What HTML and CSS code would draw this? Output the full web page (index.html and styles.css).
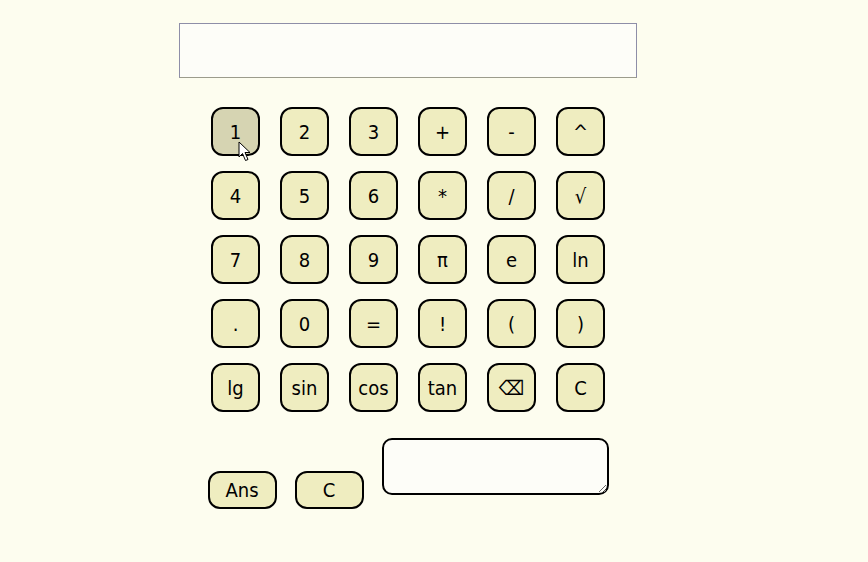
FILE: index.html
```html
<!DOCTYPE html>
<html>
<head>
<meta charset="utf-8">
<link rel="stylesheet" href="styles.css">
</head>
<body>
<div class="calc">
  <input class="display" type="text">
  <div class="keys">
    <button class="key hover">1</button>
    <button class="key">2</button>
    <button class="key">3</button>
    <button class="key">+</button>
    <button class="key">-</button>
    <button class="key">^</button>
    <button class="key">4</button>
    <button class="key">5</button>
    <button class="key">6</button>
    <button class="key">*</button>
    <button class="key">/</button>
    <button class="key">√</button>
    <button class="key">7</button>
    <button class="key">8</button>
    <button class="key">9</button>
    <button class="key">π</button>
    <button class="key">e</button>
    <button class="key">ln</button>
    <button class="key">.</button>
    <button class="key">0</button>
    <button class="key">=</button>
    <button class="key">!</button>
    <button class="key">(</button>
    <button class="key">)</button>
    <button class="key">lg</button>
    <button class="key">sin</button>
    <button class="key">cos</button>
    <button class="key">tan</button>
    <button class="key">⌫</button>
    <button class="key">C</button>
  </div>
  <div class="bottom">
    <button class="wide">Ans</button>
    <button class="wide">C</button>
    <textarea class="memo"></textarea>
  </div>
  <svg class="cursor" width="14" height="22" viewBox="0 0 14 22">
    <path d="M1 1 L1 16 L4.5 12.5 L7.5 19.5 L10 18.5 L7 11.5 L12 11.5 Z" fill="#fff" stroke="#000" stroke-width="1" stroke-linejoin="round"/>
  </svg>
</div>
</body>
</html>
```
FILE: styles.css
```css
html, body {
  margin: 0;
  padding: 0;
  background: #fdfdef;
}
body {
  font-family: "DejaVu Sans Condensed", "DejaVu Sans", sans-serif;
}
.calc {
  position: relative;
  width: 458px;
  margin: 23px 0 0 179px;
  display: flex;
  flex-direction: column;
  align-items: center;
}
.display {
  box-sizing: border-box;
  width: 458px;
  height: 55px;
  margin: 0;
  border: 1px solid #8e8ea8;
  border-bottom-color: #9c9c8c;
  background: #fdfdf8;
  outline: none;
}
.keys {
  margin-top: 29px;
  display: grid;
  grid-template-columns: repeat(6, 49px);
  grid-auto-rows: 49px;
  column-gap: 20px;
  row-gap: 15px;
}
.key, .wide {
  box-sizing: border-box;
  margin: 0;
  padding: 0;
  border: 2px solid #000;
  border-radius: 12px;
  background: #efedc0;
  color: #000;
  font-family: "DejaVu Sans Condensed", "DejaVu Sans", sans-serif;
  font-size: 20px;
  line-height: 1;
}
.key.hover {
  background: #d6d4b2;
}
.bottom {
  margin-top: 26px;
  display: flex;
  align-items: flex-start;
  gap: 18px;
}
.wide {
  width: 69px;
  height: 38px;
  margin-top: 33px;
  border-radius: 12px;
}
.memo {
  box-sizing: border-box;
  width: 227px;
  height: 57px;
  margin: 0;
  border: 2px solid #000;
  border-radius: 10px;
  background: #fdfdf8;
  outline: none;
  resize: both;
}
.cursor {
  position: absolute;
  left: 59px;
  top: 118px;
}
```
